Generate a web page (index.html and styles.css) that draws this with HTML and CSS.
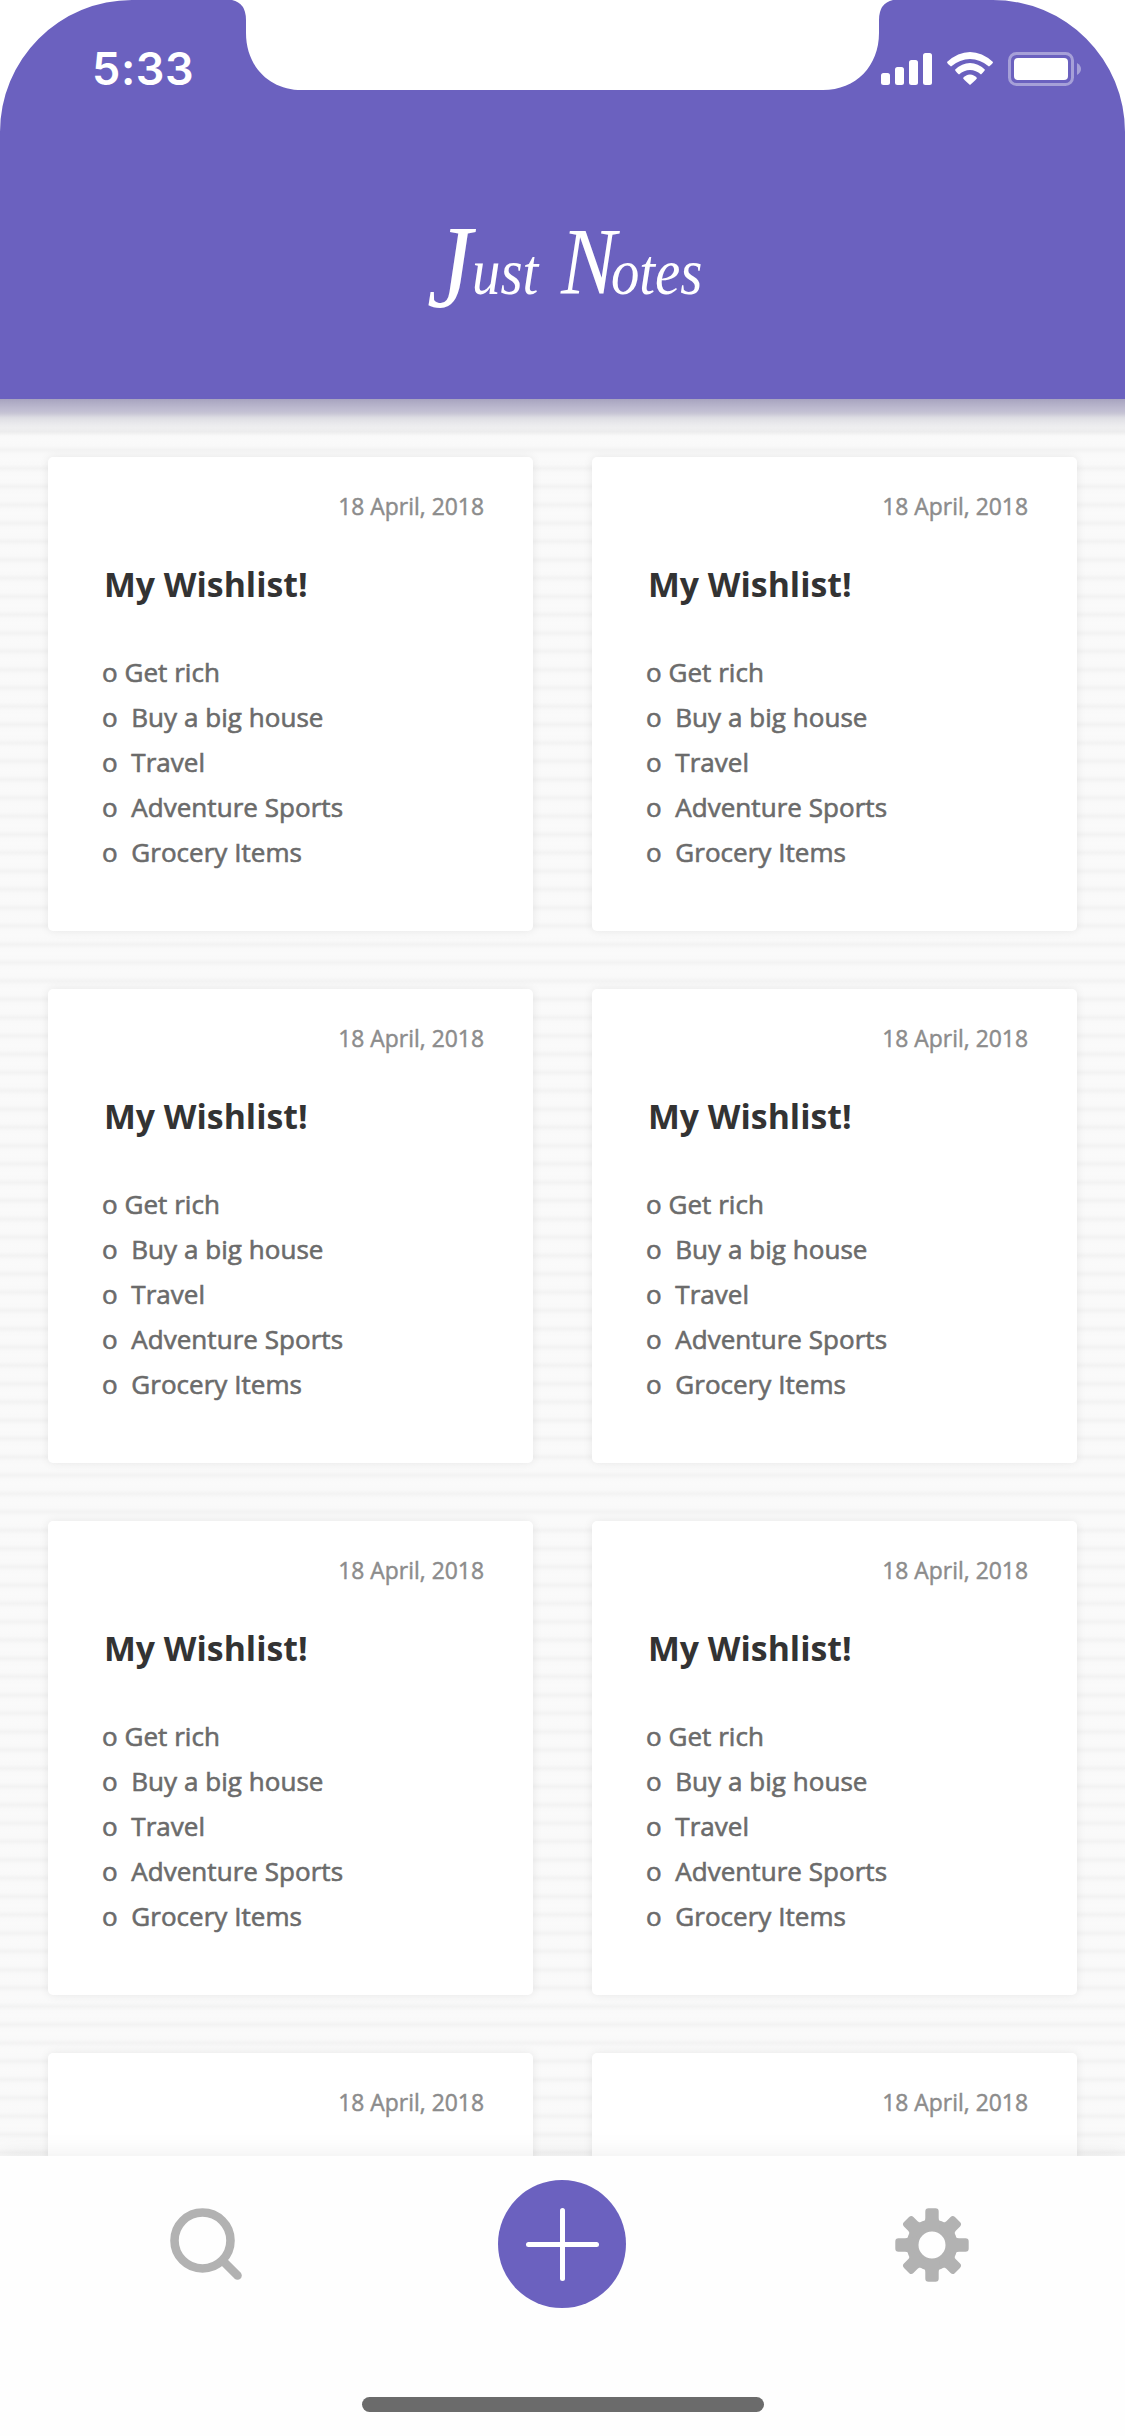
FILE: index.html
```html
<!DOCTYPE html>
<html lang="en">
<head>
<meta charset="utf-8">
<title>Just Notes</title>
<link rel="stylesheet" href="styles.css">
</head>
<body>
<div class="screen">
  <header class="header">
    <svg class="bezel" viewBox="0 0 1125 140" aria-hidden="true">
      <path d="M0 0H132A132 132 0 0 0 0 132ZM1125 0H993A132 132 0 0 1 1125 132Z"/>
      <path d="M232 0Q246 3 246 20V33C246 66 269 90 302 90H823C856 90 879 66 879 33V20Q879 3 893 0Z"/>
    </svg>
    <div class="status">
      <span class="time">5:33</span>
      <svg class="indicators" viewBox="0 0 202 36" aria-hidden="true">
        <g fill="#fff">
          <rect x="1" y="22" width="9" height="12" rx="2.5"/>
          <rect x="15" y="16" width="9" height="18" rx="2.5"/>
          <rect x="29" y="9" width="9" height="25" rx="2.5"/>
          <rect x="43" y="2" width="9" height="32" rx="2.5"/>
          <path d="M67 11Q78 1 90 1T113 11Q113.300 12 109 15.500Q100 8 90 8T71 15.500Q67 12.500 67 11Z"/>
          <path d="M75 18.700Q82 12 90 12T105 18.700Q105 19.500 101 23.500Q96 19 90 19T79 23.500Q75 20 75 18.700Z"/>
          <path d="M83 27Q86 23.500 90 23.500T97 27Q97 28 90 34Q83 28 83 27Z"/>
          <rect x="134" y="7" width="54" height="22" rx="4"/>
        </g>
        <rect x="129.500" y="2.500" width="63" height="31" rx="7" fill="none" stroke="#fff" stroke-opacity=".4" stroke-width="3"/>
        <path d="M197 12Q201 14.500 201 18T197 24Z" fill="#fff" fill-opacity=".4"/>
      </svg>
    </div>
    <h1 class="brand"><span class="word"><span class="cap cap-j">J</span>ust</span> <span class="word"><span class="cap cap-n">N</span>otes</span></h1>
  </header>

  <main class="board">
    <article class="note">
      <time class="date">18 April, 2018</time>
      <h2 class="title">My Wishlist!</h2>
      <ul class="items"><li>o Get rich</li><li>o  Buy a big house</li><li>o  Travel</li><li>o  Adventure Sports</li><li>o  Grocery Items</li></ul>
    </article>
    <article class="note">
      <time class="date">18 April, 2018</time>
      <h2 class="title">My Wishlist!</h2>
      <ul class="items"><li>o Get rich</li><li>o  Buy a big house</li><li>o  Travel</li><li>o  Adventure Sports</li><li>o  Grocery Items</li></ul>
    </article>
    <article class="note">
      <time class="date">18 April, 2018</time>
      <h2 class="title">My Wishlist!</h2>
      <ul class="items"><li>o Get rich</li><li>o  Buy a big house</li><li>o  Travel</li><li>o  Adventure Sports</li><li>o  Grocery Items</li></ul>
    </article>
    <article class="note">
      <time class="date">18 April, 2018</time>
      <h2 class="title">My Wishlist!</h2>
      <ul class="items"><li>o Get rich</li><li>o  Buy a big house</li><li>o  Travel</li><li>o  Adventure Sports</li><li>o  Grocery Items</li></ul>
    </article>
    <article class="note">
      <time class="date">18 April, 2018</time>
      <h2 class="title">My Wishlist!</h2>
      <ul class="items"><li>o Get rich</li><li>o  Buy a big house</li><li>o  Travel</li><li>o  Adventure Sports</li><li>o  Grocery Items</li></ul>
    </article>
    <article class="note">
      <time class="date">18 April, 2018</time>
      <h2 class="title">My Wishlist!</h2>
      <ul class="items"><li>o Get rich</li><li>o  Buy a big house</li><li>o  Travel</li><li>o  Adventure Sports</li><li>o  Grocery Items</li></ul>
    </article>
    <article class="note">
      <time class="date">18 April, 2018</time>
    </article>
    <article class="note">
      <time class="date">18 April, 2018</time>
    </article>
  </main>

  <nav class="nav">
    <div class="actions">
      <button class="action" aria-label="Search">
        <svg width="76" height="76" viewBox="0 0 76 76" fill="none" stroke="#b2b2b2" stroke-linecap="round">
          <circle cx="34.500" cy="34.500" r="28" stroke-width="8.600"/>
          <path d="M55 55L69.500 69.500" stroke-width="8.600"/>
        </svg>
      </button>
      <button class="action add" aria-label="Add note">
        <svg width="128" height="128" viewBox="0 0 128 128" fill="#fff">
          <rect x="28" y="62" width="73" height="5" rx="2.500"/>
          <rect x="62" y="28" width="5" height="73" rx="2.500"/>
        </svg>
      </button>
      <button class="action gear" aria-label="Settings">
        <svg width="76" height="76" viewBox="-38 -38 76 76" fill="#b2b2b2">
          <circle r="19.500" fill="none" stroke="#b2b2b2" stroke-width="12"/>
          <path id="tooth" d="M-10 -22.500Q-6.700 -23 -6.700 -27V-33.500Q-6.700 -36.700 -3.500 -36.700H3.500Q6.700 -36.700 6.700 -33.500V-27Q6.700 -23 10 -22.500L7 -17H-7Z"/>
          <use href="#tooth" transform="rotate(90)"/>
          <use href="#tooth" transform="rotate(180)"/>
          <use href="#tooth" transform="rotate(270)"/>
          <path id="diagonal" d="M-10 -22.500Q-6.700 -24 -6.700 -27V-33Q-6.700 -36 -3.500 -36H3.500Q6.700 -36 6.700 -33V-27Q6.700 -24 10 -22.500L7 -17H-7Z" transform="rotate(45)"/>
          <use href="#diagonal" transform="rotate(90)"/>
          <use href="#diagonal" transform="rotate(180)"/>
          <use href="#diagonal" transform="rotate(270)"/>
        </svg>
      </button>
    </div>
    <div class="home-bar"></div>
  </nav>
</div>
</body>
</html>
```
FILE: styles.css
```css
* { box-sizing: border-box; }

body {
  margin: 0;
  font-family: "Open Sans", "Noto Sans", sans-serif;
}

.screen {
  display: flex;
  flex-direction: column;
  width: 1125px;
  height: 2436px;
  overflow: hidden;
}

/* header */
.header {
  position: relative;
  flex: none;
  height: 399px;
  background: #6b61bf;
  z-index: 1;
}

.header::after {
  content: "";
  position: absolute;
  top: 100%;
  left: 0;
  right: 0;
  height: 37px;
  background: linear-gradient(rgba(70, 62, 122, .46), rgba(90, 82, 140, .34) 12px, rgba(100, 98, 130, .18) 19px, rgba(110, 110, 130, .09) 27px, rgba(120, 120, 130, .05) 33px, transparent);
}

.bezel {
  position: absolute;
  top: 0;
  left: 0;
  width: 1125px;
  height: 140px;
  fill: #fff;
}

.status {
  position: relative;
  display: flex;
  justify-content: space-between;
  align-items: flex-start;
  padding: 51px 43px 0 92px;
}

.time {
  font: 600 45px/36px Inter, sans-serif;
  color: #fff;
  letter-spacing: .6px;
}

.indicators {
  width: 202px;
  height: 36px;
}

.brand {
  display: flex;
  margin: 130px 0 0;
  padding-left: 427px;
  font: italic 400 66px/110px "Liberation Serif", serif;
  color: #fff;
  white-space: nowrap;
}

.word {
  width: 134px;
  transform: scaleX(.86);
  transform-origin: left;
}

.cap {
  font-size: 96px;
  line-height: 0;
}

.cap-j {
  font-size: 118px;
  vertical-align: -13px;
}

.cap-n { letter-spacing: -6px; }

/* notes */
.board {
  flex: 1;
  min-height: 0;
  overflow: hidden;
  display: grid;
  grid-template-columns: 485px 485px;
  grid-auto-rows: 474px;
  gap: 58px 59px;
  align-content: start;
  padding: 58px 48px 0;
  background: repeating-linear-gradient(#f3f3f3 0, #f9f9f9 4px, #fafafa 9px, #f9f9f9 14.3px, #f3f3f3 18.31px) 0 -4px;
}

.note {
  padding: 33px 49px 0 56px;
  background: #fff;
  border-radius: 5px;
  box-shadow: 0 0 10px rgba(0, 0, 0, .08);
}

.date {
  display: block;
  text-align: right;
  font-size: 22.9px;
  line-height: 33px;
  color: #8c8c8c;
  -webkit-text-stroke: .45px #8c8c8c;
}

.title {
  margin: 38px 0 43px;
  font-size: 33.8px;
  font-weight: 700;
  line-height: 46px;
  color: #333;
}

.items {
  margin: 0 0 0 -2px;
  padding: 0;
  list-style: none;
  font-size: 26px;
  letter-spacing: .04px;
  line-height: 45px;
  color: #6b6b6b;
  -webkit-text-stroke: .6px #6b6b6b;
  white-space: pre;
}

/* bottom bar */
.nav {
  position: relative;
  flex: none;
  display: flex;
  flex-direction: column;
  align-items: center;
  height: 280px;
  padding-top: 24px;
  background: #fefefe;
  box-shadow: 0 0 24px rgba(0, 0, 0, .08);
}

.actions {
  display: flex;
  align-self: flex-start;
  align-items: center;
  gap: 254px;
  height: 128px;
  margin-left: 168px;
}

.action {
  display: flex;
  padding: 0;
  border: 0;
  background: none;
}

.add {
  border-radius: 50%;
  background: #6b61bf;
}

.gear { margin: 2px 0 0 14px; }

.home-bar {
  width: 402px;
  height: 15px;
  margin-top: 89px;
  border-radius: 8px;
  background: #6b6b6b;
}
```
